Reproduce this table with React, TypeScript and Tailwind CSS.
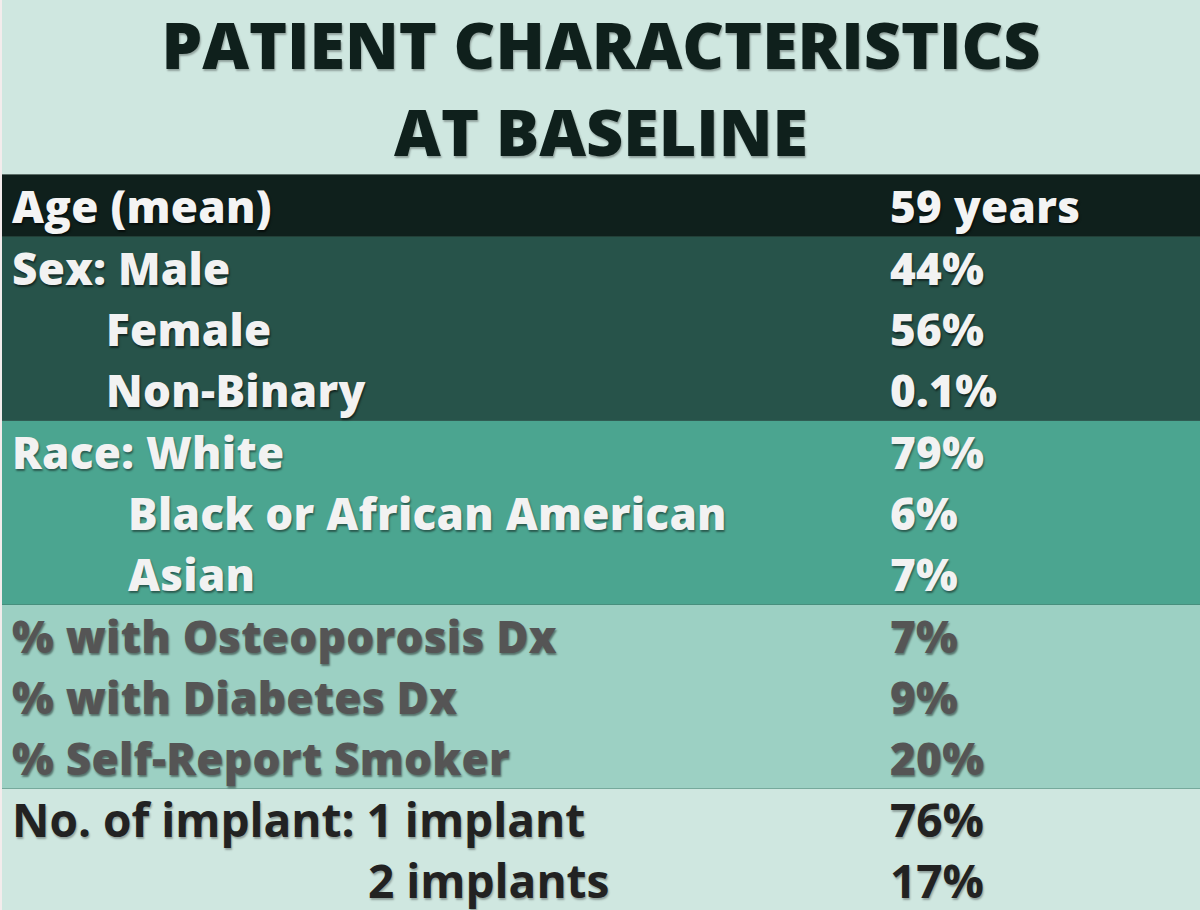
import React from 'react'

type Row = { label: string; value: string; indent?: string }

const groups: { bg: string; text: string; shadow: string; rows: Row[] }[] = [
  {
    bg: 'bg-[#0f201c]',
    text: 'text-[#f4f4f4]',
    shadow: '[text-shadow:1px_2px_2px_rgba(0,0,0,0.6)]',
    rows: [{ label: 'Age (mean)', value: '59 years' }],
  },
  {
    bg: 'bg-[#27534a]',
    text: 'text-[#f2f2f2]',
    shadow: '[text-shadow:1px_2px_2px_rgba(0,0,0,0.55)]',
    rows: [
      { label: 'Sex: Male', value: '44%' },
      { label: 'Female', value: '56%', indent: 'pl-[104px]' },
      { label: 'Non-Binary', value: '0.1%', indent: 'pl-[104px]' },
    ],
  },
  {
    bg: 'bg-[#4ba590]',
    text: 'text-[#f2f2f2]',
    shadow: '[text-shadow:1px_2px_2px_rgba(0,0,0,0.45)]',
    rows: [
      { label: 'Race: White', value: '79%' },
      { label: 'Black or African American', value: '6%', indent: 'pl-[126px]' },
      { label: 'Asian', value: '7%', indent: 'pl-[126px]' },
    ],
  },
  {
    bg: 'bg-[#9cd0c3]',
    text: 'text-[#555555]',
    shadow: '[text-shadow:1px_2px_2px_rgba(0,0,0,0.45)]',
    rows: [
      { label: '% with Osteoporosis Dx', value: '7%' },
      { label: '% with Diabetes Dx', value: '9%' },
      { label: '% Self-Report Smoker', value: '20%' },
    ],
  },
]

export default function App() {
  return (
    <div
      className="w-[1200px] h-[910px] overflow-hidden bg-[#cfe7e0] border-l-2 border-[#f3ecec]"
      style={{ fontFamily: '"Open Sans", "Noto Sans", sans-serif' }}
    >
      {/* Title */}
      <div className="h-[175px] flex flex-col items-center border-b border-[#5c6e68]">
        <h1 className="text-[64.5px] leading-[88px] font-extrabold text-[#0f201c] [font-stretch:90%] [text-shadow:1px_2px_2px_rgba(0,0,0,0.3)]">
          PATIENT CHARACTERISTICS
        </h1>
        <h1 className="text-[64.5px] leading-[86px] font-extrabold text-[#0f201c] [font-stretch:90%] [text-shadow:1px_2px_2px_rgba(0,0,0,0.3)]">
          AT BASELINE
        </h1>
      </div>

      {groups.map((g, gi) => (
        <div key={gi} className={`${g.bg} border-b border-[#3f6d62]/40`}>
          {g.rows.map((r) => (
            <div
              key={r.label}
              className={`h-[61px] flex items-center text-[44px] font-extrabold tracking-[0.3px] ${g.text} ${g.shadow}`}
            >
              <div className={`w-[888px] pl-[10px] ${r.indent ?? ''}`}>{r.label}</div>
              <div>{r.value}</div>
            </div>
          ))}
        </div>
      ))}

      {/* Implants */}
      <div className="text-[#222222] [text-shadow:1px_2px_2px_rgba(0,0,0,0.3)]">
        <div className="h-[61px] flex items-center text-[46px] font-bold">
          <div className="w-[888px] pl-[10px]">No. of implant: 1 implant</div>
          <div>76%</div>
        </div>
        <div className="h-[61px] flex items-center text-[46px] font-bold">
          <div className="w-[888px] pl-[366px]">2 implants</div>
          <div>17%</div>
        </div>
      </div>
    </div>
  )
}
